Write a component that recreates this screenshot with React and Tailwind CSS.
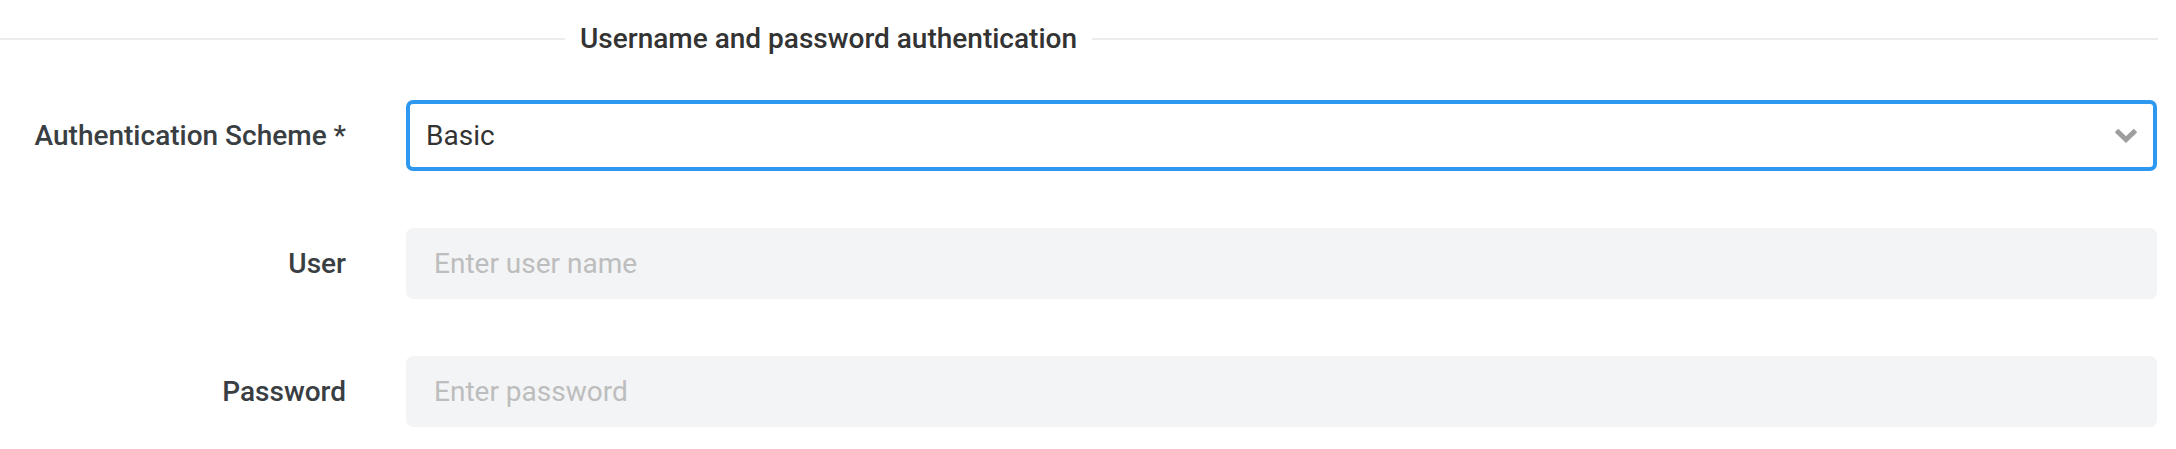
import { useState } from 'react';

function Chevron() {
  return (
    <svg width="24" height="15" viewBox="0 0 24 15" className="shrink-0">
      <polyline points="2.5,2.5 12,11.5 21.5,2.5" fill="none" stroke="#9e9e9e" strokeWidth="5" />
    </svg>
  );
}

function Row({ label, children }) {
  return (
    <div className="flex items-center">
      <label className="w-[346px] shrink-0 text-right text-[28px] font-medium text-[#393e42] leading-none">
        {label}
      </label>
      <div className="flex-1 ml-[60px]">{children}</div>
    </div>
  );
}

export default function App() {
  const [user, setUser] = useState('');
  const [password, setPassword] = useState('');

  return (
    <div className="w-[2176px] h-[449px] bg-white pr-[19px] font-['Roboto',sans-serif]">
      {/* section heading */}
      <div className="flex items-center h-[78px] -mr-[1px]">
        <div className="w-[565px] h-[2px] bg-[#ececec]" />
        <span className="px-[15px] text-[28px] font-medium text-[#333] leading-none whitespace-nowrap">
          Username and password authentication
        </span>
        <div className="flex-1 h-[2px] bg-[#ececec]" />
      </div>

      <div className="mt-[22px] flex flex-col gap-[57px]">
        <Row label="Authentication Scheme *">
          <div className="h-[71px] flex items-center justify-between border-[4px] border-[#2d98f0] rounded-[7px] pl-[16px] pr-[15px]">
            <span className="text-[28px] text-[#333] leading-none">Basic</span>
            <Chevron />
          </div>
        </Row>

        <Row label="User">
          <input
            value={user}
            onChange={(e) => setUser(e.target.value)}
            placeholder="Enter user name"
            className="w-full h-[71px] bg-[#f3f4f6] rounded-[7px] pl-[28px] text-[28px] text-[#333] placeholder:text-[#bdbdbd] outline-none"
          />
        </Row>

        <Row label="Password">
          <input
            type="password"
            value={password}
            onChange={(e) => setPassword(e.target.value)}
            placeholder="Enter password"
            className="w-full h-[71px] bg-[#f3f4f6] rounded-[7px] pl-[28px] text-[28px] text-[#333] placeholder:text-[#bdbdbd] outline-none"
          />
        </Row>
      </div>
    </div>
  );
}
